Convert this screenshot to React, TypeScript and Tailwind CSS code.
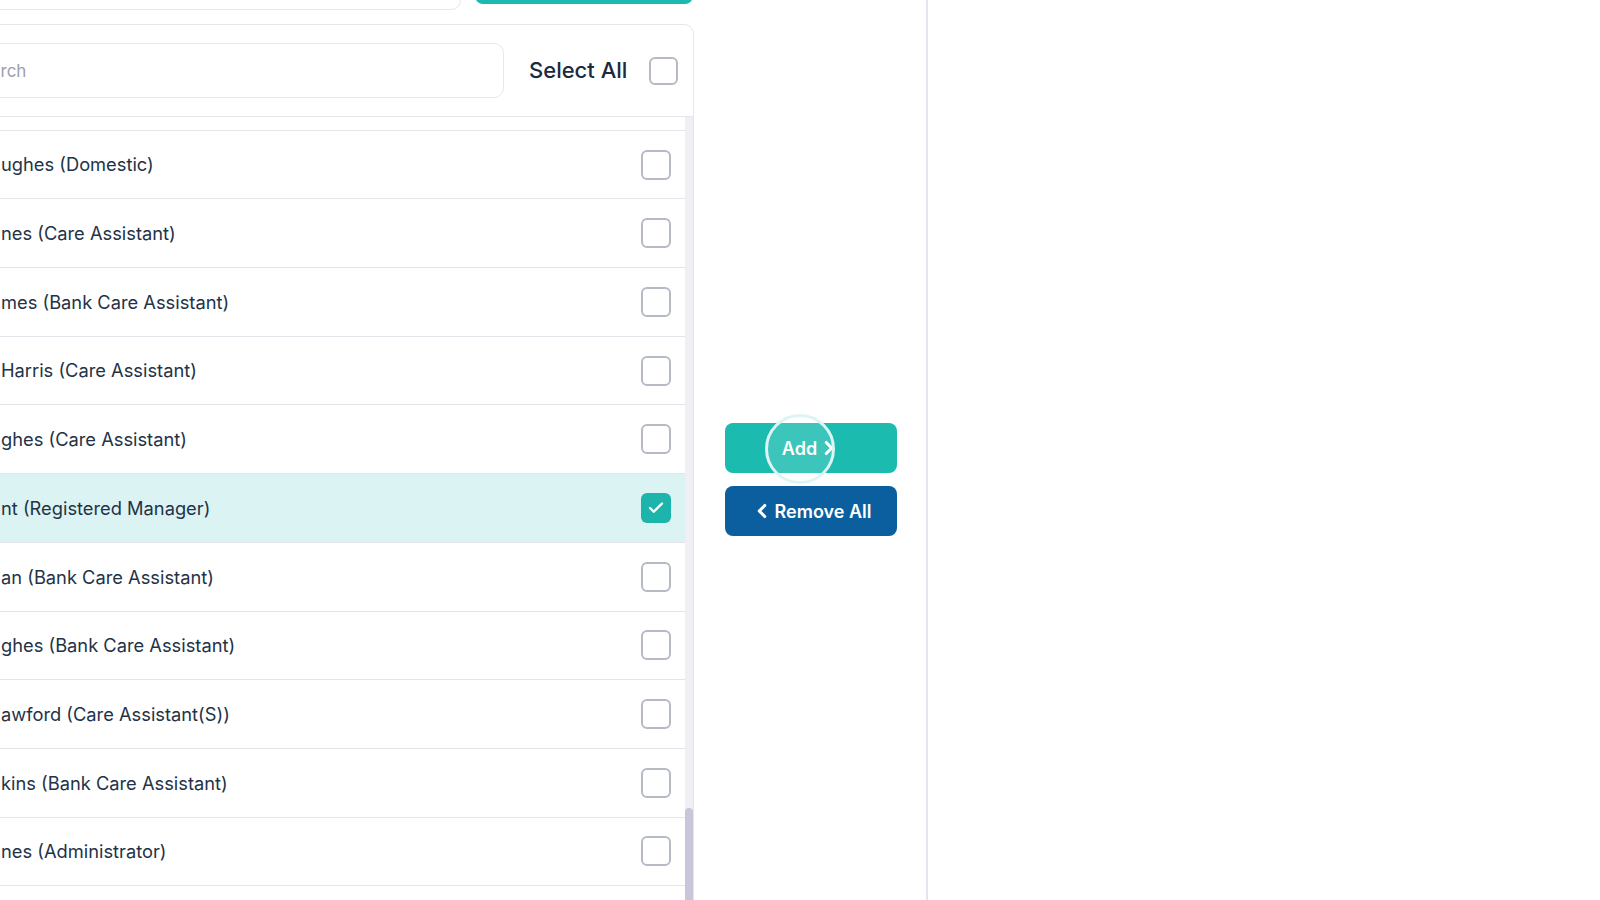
import { Check, ChevronLeft, ChevronRight } from "lucide-react";

type Member = { name: string; selected?: boolean };

const members: Member[] = [
  { name: "ggins (Care Assistant)" },
  { name: "ughes (Domestic)" },
  { name: "nes (Care Assistant)" },
  { name: "mes (Bank Care Assistant)" },
  { name: "Harris (Care Assistant)" },
  { name: "ghes (Care Assistant)" },
  { name: "nt (Registered Manager)", selected: true },
  { name: "an (Bank Care Assistant)" },
  { name: "ghes (Bank Care Assistant)" },
  { name: "awford (Care Assistant(S))" },
  { name: "kins (Bank Care Assistant)" },
  { name: "nes (Administrator)" },
  { name: "son (Care Assistant)" },
];

const Box = ({ checked, size = "h-[30px] w-[30px]" }: { checked?: boolean; size?: string }) =>
  checked ? (
    <span className={`flex ${size} shrink-0 items-center justify-center rounded-[6px] bg-[#1cb4ab]`}>
      <Check size={18} strokeWidth={3.2} className="text-white" />
    </span>
  ) : (
    <span className={`block ${size} shrink-0 rounded-[6px] border-2 border-[#b5bac4] bg-white`} />
  );

export default function App() {
  return (
    <div className="flex h-[900px] w-[1600px] overflow-hidden bg-white font-['Inter',sans-serif] text-[#233247]">
      {/* available staff column */}
      <div className="-ml-[60px] flex h-[960px] w-[754px] shrink-0 flex-col">
        <div className="-mt-[40px] flex h-[50px] items-start gap-[14px]">
          <div className="h-[50px] w-[521px] rounded-[10px] border border-[#e4e6eb] bg-white" />
          <div className="h-[44px] w-[218px] rounded-[8px] bg-[#1bb9ae]" />
        </div>

        <div className="mt-[14px] flex flex-1 flex-col rounded-tr-[10px] border border-[#e4e6eb] bg-white">
          <div className="flex h-[92px] shrink-0 items-center border-b border-[#e4e6eb] pl-[15px] pr-[15px]">
            <input
              placeholder="Search"
              className="h-[55px] w-[548px] rounded-[10px] border border-[#e6e8ec] bg-white pl-[13px] text-[17px] text-[#233247] outline-none placeholder:text-[#9ba1ab]"
            />
            <span className="ml-[25px] text-[22px] font-medium text-[#1b2a3e]">Select All</span>
            <span className="ml-auto">
              <Box size="h-[28px] w-[29px]" />
            </span>
          </div>

          <div className="flex flex-1 overflow-hidden">
            <div className="flex-1">
              <div className="-mt-[55px]">
                {members.map((m) => (
                  <div
                    key={m.name}
                    className={`flex h-[68.7px] items-center justify-between border-b border-[#e3e5ea] pr-[14px] ${
                      m.selected ? "bg-[#dcf3f4]" : "bg-white"
                    }`}
                  >
                    <span className="pl-[60px] text-[18.3px] leading-none">{m.name}</span>
                    <Box checked={m.selected} />
                  </div>
                ))}
              </div>
            </div>
            {/* scrollbar */}
            <div className="flex w-[8px] shrink-0 flex-col bg-[#efeff4] pt-[691px]">
              <div className="flex-1 rounded-t-[4px] bg-[#c7c6da]" />
            </div>
          </div>
        </div>
      </div>

      {/* transfer buttons */}
      <div className="flex w-[232px] shrink-0 flex-col gap-[13px] pl-[31px] pt-[423px]">
        <button className="relative flex h-[50px] w-[172px] items-center justify-center gap-[1px] rounded-[8px] bg-[#1bbbb0] text-[18px] font-semibold text-white">
          <span>Add</span>
          <ChevronRight size={22} strokeWidth={3.4} />
          <span className="absolute left-[40px] top-[-9px] h-[70px] w-[70px] rounded-full border-[3px] border-[#dcf5f4] bg-white/15" />
        </button>
        <button className="flex h-[50px] w-[172px] items-center justify-center gap-[2px] rounded-[8px] bg-[#0c5f9f] text-[18px] font-semibold text-white">
          <ChevronLeft size={22} strokeWidth={3.4} />
          <span>Remove All</span>
        </button>
      </div>

      {/* selected staff column */}
      <div className="flex-1 border-l-2 border-[#e6e4f0]" />
    </div>
  );
}
